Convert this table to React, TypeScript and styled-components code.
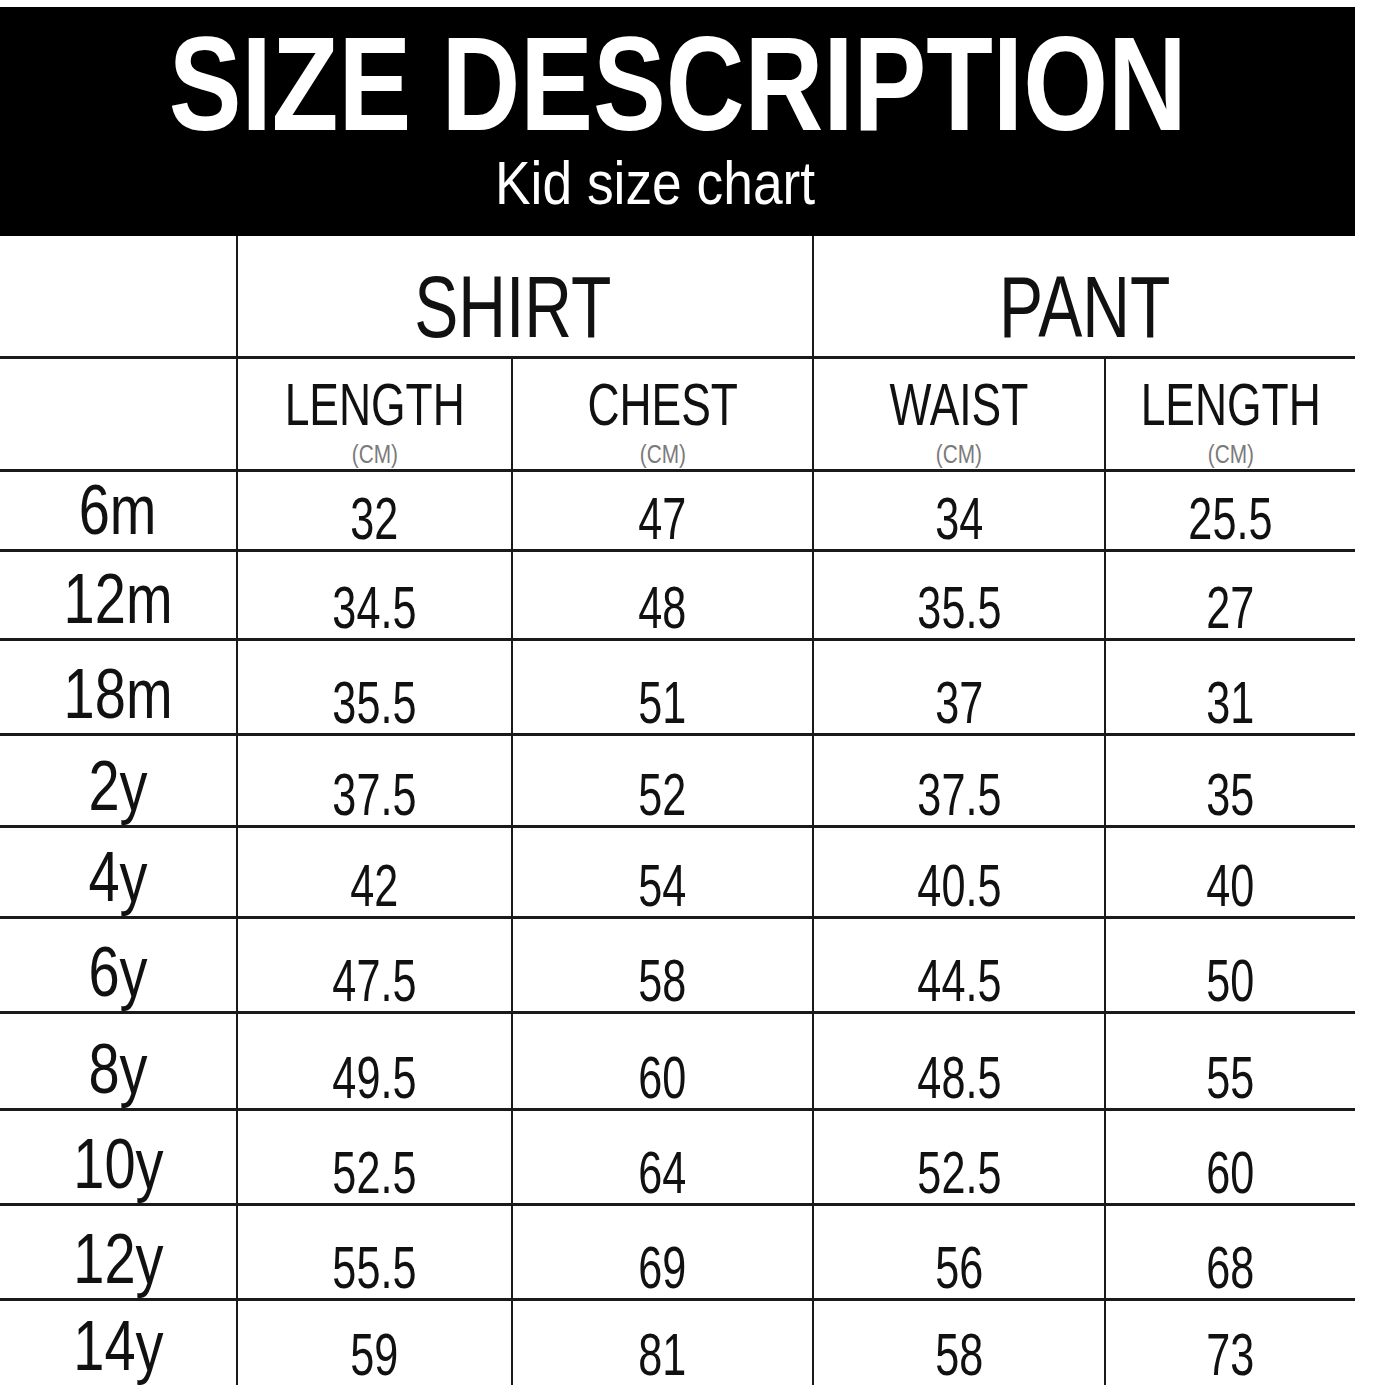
import React from 'react';
import styled, { createGlobalStyle } from 'styled-components';

const GlobalStyle = createGlobalStyle`
  body {
    margin: 0;
    background: #ffffff;
    font-family: 'Liberation Sans', Arial, sans-serif;
    color: #111111;
  }
`;

const Page = styled.div`
  width: 1375px;
  padding-top: 7px;
  background: #ffffff;
`;

const Banner = styled.header`
  width: 1355px;
  height: 229px;
  box-sizing: border-box;
  background: #000000;
  display: flex;
  flex-direction: column;
  align-items: center;
  padding-top: 22px;
`;

const Title = styled.h1`
  margin: 0;
  font-size: 133px;
  line-height: 110px;
  font-weight: 700;
  color: #ffffff;
  white-space: nowrap;
  transform: scaleX(0.82);
`;

const Subtitle = styled.div`
  margin-top: 13px;
  margin-right: 44px;
  font-size: 62px;
  line-height: 62px;
  color: #ffffff;
  white-space: nowrap;
  transform: scaleX(0.86);
`;

const Chart = styled.div`
  width: 1355px;
  display: grid;
  grid-template-columns: 236px 275px 301px 292px 251px;
`;

const Cell = styled.div<{ $left?: boolean; $top?: boolean; $span?: number; $h: number; $pb?: number; $shift?: number }>`
  box-sizing: border-box;
  height: ${(p) => p.$h}px;
  grid-column: span ${(p) => p.$span ?? 1};
  border-left: ${(p) => (p.$left ? '2px solid #1a1a1a' : 'none')};
  border-top: ${(p) => (p.$top ? '3px solid #1a1a1a' : 'none')};
  display: flex;
  flex-direction: column;
  justify-content: flex-end;
  align-items: center;
  padding-bottom: ${(p) => p.$pb ?? 0}px;
  padding-right: ${(p) => p.$shift ?? 0}px;
  overflow: visible;
`;

const GroupName = styled.span`
  font-size: 87px;
  line-height: 1;
  white-space: nowrap;
  transform: scaleX(0.76);
`;

const ColName = styled.span`
  font-size: 60px;
  line-height: 1;
  white-space: nowrap;
  transform: scaleX(0.74);
`;

const Unit = styled.span`
  margin-top: 6px;
  font-size: 26px;
  line-height: 1;
  color: #7a7a7a;
  white-space: nowrap;
  transform: scaleX(0.8);
`;

const SizeLabel = styled.span`
  font-size: 70px;
  line-height: 1;
  white-space: nowrap;
  transform: scaleX(0.8);
`;

const Value = styled.span`
  font-size: 60px;
  line-height: 1;
  white-space: nowrap;
  transform: scaleX(0.72);
`;

type Row = { size: string; values: string[]; h: number };

const rows: Row[] = [
  { size: '6m', values: ['32', '47', '34', '25.5'], h: 80 },
  { size: '12m', values: ['34.5', '48', '35.5', '27'], h: 89 },
  { size: '18m', values: ['35.5', '51', '37', '31'], h: 95 },
  { size: '2y', values: ['37.5', '52', '37.5', '35'], h: 92 },
  { size: '4y', values: ['42', '54', '40.5', '40'], h: 91 },
  { size: '6y', values: ['47.5', '58', '44.5', '50'], h: 95 },
  { size: '8y', values: ['49.5', '60', '48.5', '55'], h: 97 },
  { size: '10y', values: ['52.5', '64', '52.5', '60'], h: 95 },
  { size: '12y', values: ['55.5', '69', '56', '68'], h: 95 },
  { size: '14y', values: ['59', '81', '58', '73'], h: 87 },
];

const columns = ['LENGTH', 'CHEST', 'WAIST', 'LENGTH'];

const App = () => {
  return (
    <Page>
      <GlobalStyle />
      <Banner>
        <Title>SIZE DESCRIPTION</Title>
        <Subtitle>Kid size chart</Subtitle>
      </Banner>
      <Chart>
        {/* group header */}
        <Cell $h={120} />
        <Cell $h={120} $span={2} $left $pb={6} $shift={24}>
          <GroupName>SHIRT</GroupName>
        </Cell>
        <Cell $h={120} $span={2} $left $pb={6}>
          <GroupName>PANT</GroupName>
        </Cell>

        {/* column header */}
        <Cell $h={113} $top />
        {columns.map((c, i) => (
          <Cell key={i} $h={113} $top $left $pb={2}>
            <ColName>{c}</ColName>
            <Unit>(CM)</Unit>
          </Cell>
        ))}

        {rows.map((r) => (
          <React.Fragment key={r.size}>
            <Cell $h={r.h} $top $pb={4}>
              <SizeLabel>{r.size}</SizeLabel>
            </Cell>
            {r.values.map((v, i) => (
              <Cell key={i} $h={r.h} $top $left $pb={0}>
                <Value>{v}</Value>
              </Cell>
            ))}
          </React.Fragment>
        ))}
      </Chart>
    </Page>
  );
};

export default App;
